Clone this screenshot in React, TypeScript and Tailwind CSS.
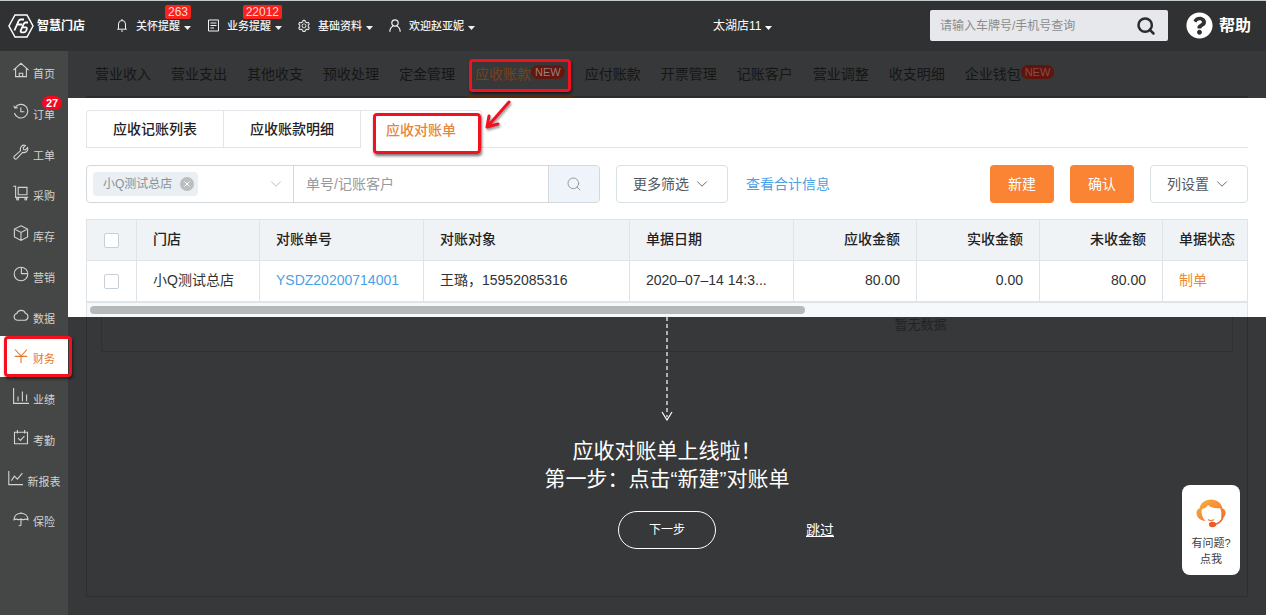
import type { ReactNode } from "react"
import { ChevronDown, Search } from "lucide-react"
import { AiOutlineSetting } from "react-icons/ai"
import { FaQuestionCircle } from "react-icons/fa"

const sideItems: { label: string; icon: ReactNode; badge?: string; active?: boolean }[] = [
  { label: "首页", icon: <path d="M.4 8.2 8 1.3l7.600 6.900M2.6 6.600v8h10.800v-8M6.3 14.400v-3.200h3.400v3.200" /> },
  { label: "订单", icon: <path d="M2.2 4.5A6.8 6.8 0 1 1 1.4 10M.8 2.8l1.2 2.4 2.6-.6M7.8 4.5v4.2h3.6" />, badge: "27" },
  {
    label: "工单",
    icon: (
      <path d="M1.4 12.2 7.6 6.6C6.6 3.4 9.2.4 12.4 1.4L10.2 3.8l.4 1.8 1.8.2 2.2-2.2c1 3.2-2 5.6-5 4.8L3.8 14.6a1.7 1.7 0 0 1-2.4-2.4Z" />
    ),
  },
  {
    label: "采购",
    icon: (
      <>
        <path d="M.2 1.200h2.400v11.200h12.600M5.200 2.400h8.800v7.400H5.200z" />
        <circle cx="4.6" cy="14" r="1" />
        <circle cx="12.8" cy="14" r="1" />
      </>
    ),
  },
  { label: "库存", icon: <path d="M8 .8 14.6 4v8L8 15.4 1.4 12V4ZM1.4 4 8 7.4 14.6 4M8 7.4v8" /> },
  {
    label: "营销",
    icon: (
      <>
        <circle cx="8" cy="8" r="6.8" />
        <path d="M8.400 1.200v6.400h6.400" />
      </>
    ),
  },
  {
    label: "数据",
    icon: <path d="M4.2 13.2a3.4 3.4 0 0 1-.4-6.7 4.6 4.6 0 0 1 8.6-.3 3.6 3.6 0 0 1-.4 7Z" />,
  },
  { label: "财务", icon: <path d="M2 1.5 8 8l6-6.5M1.8 8.4h12.4M8 8v7" />, active: true },
  { label: "业绩", icon: <path d="M.6 0v15.400H16M5 13.200V8.400M9.400 13.200V3.400M13.600 13.200V6.600" /> },
  { label: "考勤", icon: <path d="M1.5 3.2h13v11.6h-13zM4.4 1v3.6M11.6 1v3.6M5 9.2l2.4 2.2 4-4.2" /> },
  { label: "新报表", icon: <path d="M.8 1v13.6H15M3.4 10.6l3-4.4 3 3 5-6" /> },
  {
    label: "保险",
    icon: <path d="M8 1v1.200M1 8.800C1.200 4.600 4.200 2.200 8 2.200s6.800 2.400 7 6.600c-1.200-.8-3.200-.8-4.600 0-1.400-.8-3.400-.8-4.800 0-1.400-.8-3.400-.8-4.600 0ZM8 8.400v5.200a1.200 1.200 0 0 1-2.2.6" />,
  },
]

const navItems = [
  { label: "营业收入" },
  { label: "营业支出" },
  { label: "其他收支" },
  { label: "预收处理" },
  { label: "定金管理" },
  { label: "应收账款", isNew: true, active: true },
  { label: "应付账款" },
  { label: "开票管理" },
  { label: "记账客户" },
  { label: "营业调整" },
  { label: "收支明细" },
  { label: "企业钱包", isNew: true },
]

function Caret() {
  return (
    <svg width="7" height="4" viewBox="0 0 7 4" className="mt-1 shrink-0" fill="currentColor">
      <path d="M0 0h7L3.5 4z" />
    </svg>
  )
}

function Highlight({ className }: { className: string }) {
  return (
    <span
      className={`pointer-events-none absolute z-20 rounded-sm border-[3px] border-[#f3101f] shadow-[1px_2px_3px_rgba(0,0,0,0.55)] ${className}`}
    />
  )
}

function Logo() {
  return (
    <a href="#" className="flex items-center gap-[3px] text-white">
      <svg width="26" height="26" viewBox="0 0 26 26" fill="none" stroke="currentColor" strokeWidth="1.5">
        <path d="M7 2h12l6 11-6 11H7L1 13Z" />
        <path d="M16 6.500h-3.400c-1 0-1.400.4-1.800 1.200L6.400 17.500M9.800 11.500h4.400" strokeWidth="1.8" />
        <path
          d="M20 9.500h-2.400c-.9 0-1.400.4-1.800 1.200l-3 6.600c-.5 1.200 0 2 1.200 2h2c1 0 1.500-.4 1.900-1.200l.9-2c.4-1-.1-1.700-1.100-1.700h-2.800"
          strokeWidth="1.8"
        />
      </svg>
      <span className="text-xs font-bold">智慧门店</span>
    </a>
  )
}

function HeaderItem({ icon, label, badge }: { icon: ReactNode; label: string; badge?: string }) {
  return (
    <button type="button" className="relative flex items-center text-[#f2f2f2]">
      <span className="mr-2 flex w-3 justify-center">{icon}</span>
      <span className="mr-1 pt-px text-[11px] font-medium">{label}</span>
      <Caret />
      {badge && (
        <span className="absolute right-0 -top-3 rounded-xs bg-[#f9221c] px-[3px] text-xs leading-[14px] text-[#ffdcd8]">
          {badge}
        </span>
      )}
    </button>
  )
}

function Header() {
  return (
    <header className="flex h-[51px] items-center border-t border-[#c3cace] bg-[#303132] pb-px pl-2 pr-[15px]">
      <Logo />
      <div className="ml-[31px] flex items-center gap-4">
        <HeaderItem
          label="关怀提醒"
          badge="263"
          icon={
            <svg width="10" height="13" viewBox="0 0 10 13" fill="none" stroke="currentColor">
              <path d="M1.5 10V5a3.5 3.5 0 0 1 7 0v5M.2 10.2h9.6M5 0v1.5M4 12h2" />
            </svg>
          }
        />
        <HeaderItem
          label="业务提醒"
          badge="22012"
          icon={
            <svg width="11" height="13" viewBox="0 0 11 13" fill="none" stroke="currentColor">
              <path d="M.5 1h10v11H.5zM2.5 4h6M2.5 6.5h6M2.5 9H6" />
            </svg>
          }
        />
        <HeaderItem label="基础资料" icon={<AiOutlineSetting className="size-[14px] shrink-0" />} />
        <HeaderItem
          label="欢迎赵亚妮"
          icon={
            <svg width="12" height="13" viewBox="0 0 12 13" fill="none" stroke="currentColor" strokeWidth="1.2">
              <circle cx="6" cy="4" r="3.2" />
              <path d="M.8 12.8c0-3 1.6-5 3.6-5.8M11.2 12.8c0-3-1.6-5-3.6-5.8" />
            </svg>
          }
        />
      </div>
      <button type="button" className="ml-[238px] flex items-center gap-1 text-xs text-white">
        太湖店11
        <Caret />
      </button>
      <div className="ml-auto flex items-center">
        <div className="flex h-[31px] w-[238px] items-center rounded-xs bg-[#e7e8eb] pl-2.5 pr-3">
          <input
            aria-label="查询"
            placeholder="请输入车牌号/手机号查询"
            className="min-w-0 flex-1 bg-transparent text-xs outline-none placeholder:text-[#8b8c8e]"
          />
          <button type="button" aria-label="搜索" className="text-[#2b2c2d]">
            <Search size={20} strokeWidth={3} />
          </button>
        </div>
        <a href="#" className="ml-[18px] flex items-center gap-1.5 text-base font-bold text-white">
          <FaQuestionCircle className="size-[27px]" />
          帮助
        </a>
      </div>
    </header>
  )
}

function Sidebar() {
  return (
    <aside className="w-[68px] shrink-0 bg-[#444745]">
      <nav className="flex h-[489px] flex-col">
        {sideItems.map((item) => (
          <a
            key={item.label}
            href="#"
            className={`relative flex flex-1 items-center justify-center gap-1 text-[11px] ${
              item.active ? "bg-white text-[#e8762a]" : "text-[#d2d3d2]"
            }`}
          >
            <svg
              width="16"
              height="16"
              viewBox="0 0 16 16"
              fill="none"
              stroke="currentColor"
              strokeWidth="1.1"
              className="mb-0.5"
            >
              {item.icon}
            </svg>
            <span className="pt-1.5">{item.label}</span>
            {item.badge && (
              <span className="absolute left-[42px] top-1 rounded-full bg-[#f5071c] px-1 text-[11px] leading-[14px] font-bold text-white">
                {item.badge}
              </span>
            )}
            {item.active && <Highlight className="-right-1 bottom-0 left-1 top-0" />}
          </a>
        ))}
      </nav>
    </aside>
  )
}

function TopNav() {
  return (
    <nav className="mx-[18px] flex h-[47px] gap-5 border-b-2 border-[#2c2d2e] pl-[9px] text-sm text-[#151616]">
      {navItems.map((item) => (
        <a
          key={item.label}
          href="#"
          className={`relative flex items-center whitespace-nowrap pt-px ${item.active ? "text-[#7a4019]" : ""}`}
        >
          {item.label}
          {item.isNew && (
            <span
              className={`mb-1 rounded-full px-1 text-[11px] leading-[14px] ${
                item.active ? "bg-[#64170f] text-[#9c7e7a]" : "bg-[#5f140e] text-[#8c4a44]"
              }`}
            >
              NEW
            </span>
          )}
          {item.active && (
            <>
              <span className="absolute -bottom-0.5 -left-2 -right-2 h-0.5 bg-[#5a2807]" />
              <Highlight className="-left-1.5 -right-1.5 bottom-1 top-2" />
            </>
          )}
        </a>
      ))}
    </nav>
  )
}

function Tabs() {
  return (
    <div className="flex h-[38px] text-sm font-medium text-[#1f2123]">
      <button type="button" className="rounded-tl border border-r-0 border-[#e2e6ea] px-[26px]">
        应收记账列表
      </button>
      <button type="button" className="border border-[#e2e6ea] px-[26px]">
        应收账款明细
      </button>
      <button
        type="button"
        className="relative rounded-tr border-r border-t border-[#e2e6ea] px-[25px] text-[#e8853a]"
      >
        应收对账单
        <Highlight className="-bottom-1.5 left-3 right-0 top-0.5" />
        <svg
          width="30"
          height="34"
          viewBox="0 0 30 34"
          fill="none"
          stroke="#f3101f"
          strokeWidth="3"
          strokeLinecap="round"
          strokeLinejoin="round"
          className="absolute -right-8 -top-4 z-20 drop-shadow-[1px_2px_1px_rgba(0,0,0,0.4)]"
        >
          <path d="M26 7 5 31M6 21 4 32l11-3" />
        </svg>
      </button>
      <div className="flex-1 border-b border-[#e2e6ea]" />
    </div>
  )
}

function Toolbar() {
  return (
    <div className="mt-[17px] flex h-[38px] text-sm text-[#55585c]">
      <div className="flex w-[514px] rounded border border-[#d3d8dd]">
        <div className="flex w-[207px] items-center border-r border-[#d3d8dd] pl-1.5 pr-2">
          <span className="flex h-6 items-center gap-2 rounded bg-[#eaeff3] pl-2.5 pr-1 text-xs text-[#8a8f96]">
            小Q测试总店
            <button type="button" aria-label="移除" className="rounded-full bg-[#bcbfc0] text-white">
              <svg width="14" height="14" viewBox="0 0 14 14" stroke="currentColor">
                <path d="m4.5 4.5 5 5M9.5 4.5l-5 5" />
              </svg>
            </button>
          </span>
          <ChevronDown size={18} strokeWidth={1} className="ml-auto text-[#a4a8ad]" />
        </div>
        <input
          aria-label="单号/记账客户"
          placeholder="单号/记账客户"
          className="min-w-0 flex-1 px-3 outline-none placeholder:text-[#96999e]"
        />
        <button
          type="button"
          aria-label="查询"
          className="flex w-[51px] items-center justify-center rounded-r border-l border-[#d3d8dd] bg-[#eff4fa] text-[#96999e]"
        >
          <Search size={16} strokeWidth={1.5} />
        </button>
      </div>
      <button type="button" className="ml-4 flex items-center gap-1 rounded border border-[#d8e1e6] px-4">
        更多筛选
        <ChevronDown size={18} strokeWidth={1.2} />
      </button>
      <a href="#" className="ml-[18px] self-center text-[#4b9fe3]">
        查看合计信息
      </a>
      <div className="ml-auto flex gap-4">
        <button type="button" className="rounded bg-[#fa8334] px-[18px] text-white">
          新建
        </button>
        <button type="button" className="rounded bg-[#fa8334] px-[18px] text-white">
          确认
        </button>
        <button type="button" className="flex items-center gap-1 rounded border border-[#d8e1e6] px-4">
          列设置
          <ChevronDown size={18} strokeWidth={1.2} />
        </button>
      </div>
    </div>
  )
}

const th = "h-[41px] border border-[#dfe4e8] px-4 pb-0.5 font-medium whitespace-nowrap"
const td = "h-[41px] border border-[#dfe4e8] px-4 pb-0.5 whitespace-nowrap"
const box = "block size-[15px] mx-auto appearance-none rounded-xs border border-[#c9cfd4] bg-white"

function StatementTable() {
  return (
    <div className="mt-4">
      <table className="w-full table-fixed border-collapse text-sm text-[#2f3235]">
        <colgroup>
          <col className="w-[50px]" />
          <col className="w-[123px]" />
          <col className="w-[164px]" />
          <col className="w-[206px]" />
          <col className="w-[164px]" />
          <col className="w-[123px]" />
          <col className="w-[123px]" />
          <col className="w-[123px]" />
          <col />
        </colgroup>
        <thead className="bg-[#eff3f6] text-left text-[#1f2123]">
          <tr>
            <th className="h-[41px] border border-[#dfe4e8]">
              <input type="checkbox" aria-label="全选" className={box} />
            </th>
            <th className={th}>门店</th>
            <th className={th}>对账单号</th>
            <th className={th}>对账对象</th>
            <th className={th}>单据日期</th>
            <th className={`${th} text-right`}>应收金额</th>
            <th className={`${th} text-right`}>实收金额</th>
            <th className={`${th} text-right`}>未收金额</th>
            <th className={th}>单据状态</th>
          </tr>
        </thead>
        <tbody>
          <tr>
            <td className="h-[41px] border border-[#dfe4e8]">
              <input type="checkbox" aria-label="选择 YSDZ20200714001" className={box} />
            </td>
            <td className={td}>小Q测试总店</td>
            <td className={td}>
              <a href="#" className="text-[#4b9fe3]">
                YSDZ20200714001
              </a>
            </td>
            <td className={td}>王璐，15952085316</td>
            <td className={td}>2020–07–14 14:3...</td>
            <td className={`${td} text-right`}>80.00</td>
            <td className={`${td} text-right`}>0.00</td>
            <td className={`${td} text-right`}>80.00</td>
            <td className={`${td} text-[#ee8a35]`}>制单</td>
          </tr>
        </tbody>
      </table>
      <div className="h-[15px] border-x border-t border-[#dfe4e8] bg-[#f6f9fc] px-[3px] pt-[3px]">
        <div className="h-2 w-[62%] rounded-full bg-[#b4b9ba]" />
      </div>
    </div>
  )
}

function Guide() {
  return (
    <div className="absolute inset-x-0 top-0 flex flex-col items-center text-white">
      <svg width="12" height="104" viewBox="0 0 12 104" fill="none" stroke="currentColor" strokeWidth="1.2">
        <path d="M6 0v100" strokeDasharray="4 3" />
        <path d="m1 95 5 8 5-8" />
      </svg>
      <p className="mt-4 text-center text-[21px] leading-7">
        应收对账单上线啦！
        <br />
        第一步：点击“新建”对账单
      </p>
      <div className="mt-[18px] grid w-full grid-cols-[1fr_auto_1fr] items-center">
        <button type="button" className="col-start-2 h-[38px] w-[98px] rounded-full border border-white text-xs">
          下一步
        </button>
        <a href="#" className="ml-[90px] justify-self-start text-sm underline">
          跳过
        </a>
      </div>
    </div>
  )
}

function SupportButton() {
  return (
    <button
      type="button"
      className="fixed bottom-10 right-[26px] flex h-[90px] w-[58px] flex-col items-center rounded-lg bg-white pt-3 text-[11px] leading-4 text-[#3c3d3e]"
    >
      <svg width="32" height="32" viewBox="0 0 32 32" fill="none" className="mb-1.5">
        <defs>
          <linearGradient id="hair" x1="0" y1="0" x2="1" y2="1">
            <stop offset="0" stopColor="#fbb040" />
            <stop offset="1" stopColor="#f26a2a" />
          </linearGradient>
        </defs>
        <path
          d="M4.500 11.500C5.500 6 10 2.500 16 2.500S26.500 6 27.500 11.500c2 .5 3 2.200 3 4.500s-1 4-3 4.500L26 21c.8-3.500.5-7-1-10-4 .6-9-.2-12-3-1.300 2.200-3.500 3.600-6 4-1.200 4.500.5 9 3.500 12C5.500 23.500 1.500 20.500 1.500 16c0-2.300 1-4 3-4.500Z"
          fill="url(#hair)"
        />
        <path d="M13 22.500c1.800 1.300 4.200 1.300 6 0" stroke="#f58233" strokeWidth="1.2" />
        <path d="M28 20c-1.200 4-4 6.500-8.500 7.500" stroke="#ef6530" strokeWidth="1.6" />
        <ellipse cx="17.500" cy="27.500" rx="3.600" ry="2.800" fill="#ea5b2c" />
      </svg>
      <span>有问题?</span>
      <span>点我</span>
    </button>
  )
}

export default function App() {
  return (
    <div className="flex min-h-screen flex-col bg-[#373839] font-['Liberation_Sans','Noto_Sans_CJK_SC',sans-serif]">
      <Header />
      <div className="flex flex-1">
        <Sidebar />
        <main className="flex min-w-0 flex-1 flex-col">
          <TopNav />
          <section className="bg-white px-[18px] pt-3">
            <Tabs />
            <Toolbar />
            <StatementTable />
          </section>
          <section className="relative flex flex-1 flex-col">
            <div className="mx-[18px] mb-[18px] flex-1 border border-t-0 border-[#2d2e2f] px-3.5">
              <div className="h-[35px] border border-t-0 border-[#2f3031] pl-[70%] text-[13px] leading-4 text-[#222324]">
                暂无数据
              </div>
            </div>
            <Guide />
          </section>
        </main>
      </div>
      <SupportButton />
    </div>
  )
}
